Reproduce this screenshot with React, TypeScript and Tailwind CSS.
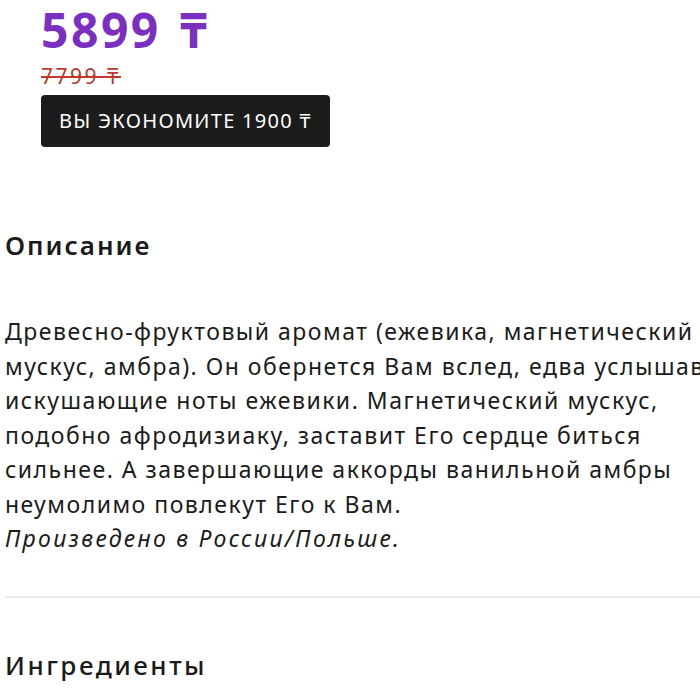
import React from "react";

export default function App() {
  const font = { fontFamily: '"Noto Sans", "DejaVu Sans", sans-serif' };
  return (
    <div className="w-[700px] h-[700px] overflow-hidden bg-white text-[#1b1b1b]" style={font}>
      <div className="pl-[41px] pt-[2px]">
        <div className="text-[48px] leading-[56px] font-bold tracking-[2.5px] text-[#7a2fc0] whitespace-nowrap">
          5899 <span className="ml-[4px]">₸</span>
        </div>
        <div className="mt-[7px] text-[21px] leading-[22px] tracking-[2.5px] text-[#b8392e] line-through decoration-[#c0392b]">
          7799 ₸
        </div>
        <div className="mt-[8px] inline-flex items-center h-[52px] px-[18px] bg-[#1c1c1c] rounded-[4px] text-white text-[20px] tracking-[1.3px]">
          ВЫ ЭКОНОМИТЕ 1900 ₸
        </div>
      </div>
      <div className="pl-[5px]">
        <h2 className="mt-[83px] text-[26px] leading-[30px] font-semibold tracking-[2px]">Описание</h2>
        <p className="mt-[54px] text-[23px] leading-[34.5px] tracking-[1.5px] whitespace-nowrap">
          Древесно-фруктовый аромат (ежевика, магнетический
          <br />
          мускус, амбра). Он обернется Вам вслед, едва услышав
          <br />
          искушающие ноты ежевики. Магнетический мускус,
          <br />
          подобно афродизиаку, заставит Его сердце биться
          <br />
          сильнее. А завершающие аккорды ванильной амбры
          <br />
          неумолимо повлекут Его к Вам.
          <br />
          <em className="tracking-[2.3px]">Произведено в России/Польше.</em>
        </p>
        <div className="mt-[40px] h-[2px] bg-[#ececec]" />
        <h2 className="mt-[52px] text-[26px] leading-[30px] font-medium tracking-[2.5px]">Ингредиенты</h2>
      </div>
    </div>
  );
}
